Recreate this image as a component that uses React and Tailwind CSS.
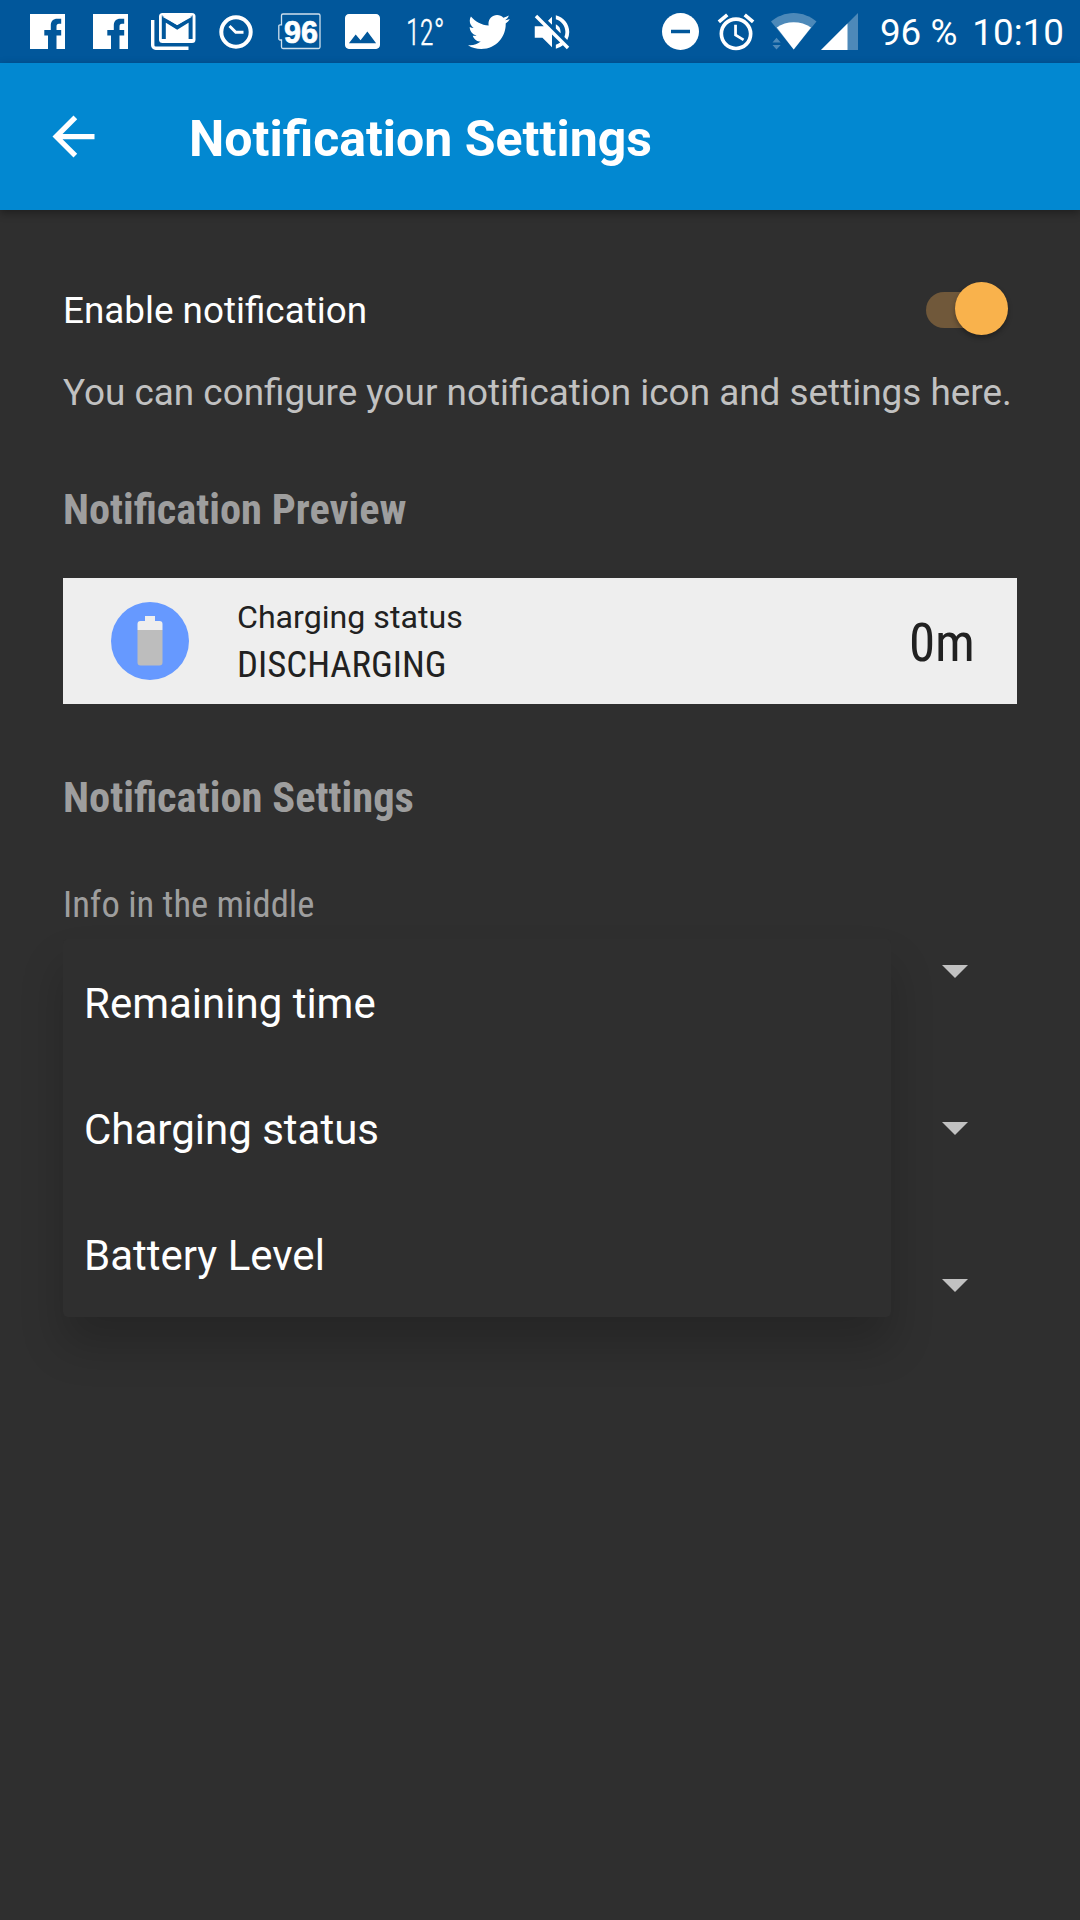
import React, { useState } from 'react';
import { MdArrowBack, MdVolumeOff, MdAlarm } from 'react-icons/md';
import { FaTwitter } from 'react-icons/fa';

const options = ['Remaining time', 'Charging status', 'Battery Level'];

const FacebookIcon = ({ className }) => (
    <svg viewBox="0 0 35 35" className={className} fill="#fff">
        <path d="M0 0h35v35H26.500V21.500h4.700v-5.500h-4.700v-3.500c0-1.800.7-2.700 2.500-2.700h2.200V4.700h-3.700c-4.500 0-6.700 2.600-6.700 6.800v4.500h-6.500v5.500h3.700V35H0z" />
    </svg>
);

const GmailIcon = () => (
    <svg viewBox="0 0 45 39" className="ml-[23px] h-[39px] w-[45px] shrink-0" fill="none">
        <path d="M1.700 8v25.300a3 3 0 0 0 3 3H37.500" stroke="#fff" strokeWidth="3.400" />
        <rect x="8" y="1" width="36.500" height="30" rx="3.500" fill="#fff" />
        <path d="M12.800 27V7L26.200 15.500L39.600 7V27" stroke="#01579b" strokeWidth="4" />
        <path d="M11 4.500H41.500L26.200 13Z" fill="#fff" />
    </svg>
);

const ClockIcon = () => (
    <svg viewBox="0 0 34 34" className="ml-[23px] h-[34px] w-[34px] shrink-0" fill="none" stroke="#fff">
        <circle cx="17" cy="17" r="14.700" strokeWidth="4" />
        <path d="M10.500 11L16.800 17.200H24.500" strokeWidth="3" />
    </svg>
);

const ImageIcon = () => (
    <svg viewBox="3 3 18 18" className="ml-[24px] h-[35px] w-[35px] shrink-0" fill="#fff">
        <path d="M21 19V5c0-1.100-.9-2-2-2H5c-1.100 0-2 .9-2 2v14c0 1.100.9 2 2 2h14c1.100 0 2-.9 2-2zM8.500 13.500l2.500 3.010L14.500 12l4.500 6H5l3.500-4.500z" />
    </svg>
);

const BatteryLevelIcon = () => (
    <svg viewBox="0 0 43 37" className="ml-[25px] h-[37px] w-[43px] shrink-0">
        <path d="M5 1H40.500a1.500 1.500 0 0 1 1.500 1.500V34a1.500 1.500 0 0 1-1.500 1.500H5a1.500 1.500 0 0 1-1.500-1.500V27H2a1.200 1.200 0 0 1-1.200-1.200V13A1.200 1.200 0 0 1 2 11.800H3.500V2.500A1.500 1.500 0 0 1 5 1z" fill="none" stroke="#cfe0ed" strokeWidth="1.300" />
        <text x="6" y="29.500" fontSize="30.500" fontWeight="700" fontFamily="Liberation Sans, sans-serif" fill="#fff" stroke="#fff" strokeWidth=".7" textLength="34">96</text>
    </svg>
);

const TemperatureIcon = () => (
    <svg viewBox="0 0 48 51" className="ml-[26px] h-[51px] w-[48px] shrink-0 overflow-visible">
        <text x="0" y="38.500" fontSize="36" fontWeight="300" fontFamily="Roboto Condensed, Roboto, sans-serif" fill="#fff" stroke="#fff" strokeWidth=".4" textLength="38.500" lengthAdjust="spacingAndGlyphs">12°</text>
    </svg>
);

const DoNotDisturbIcon = () => (
    <svg viewBox="0 0 37 37" className="h-[37px] w-[37px] shrink-0">
        <circle cx="18.500" cy="18.500" r="18.500" fill="#fff" />
        <path d="M9 18.500H28" stroke="#01579b" strokeWidth="3.500" />
    </svg>
);

const WifiIcon = () => (
    <svg viewBox="0 0 46 37" className="ml-[13px] h-[37px] w-[46px] shrink-0" fill="#fff">
        <path d="M0 8.500C6 3.500 14 0 22.700 0S39.500 3.500 45.500 8.500L22.700 36.500Z" fillOpacity=".3" />
        <path d="M5.800 14.500C10.500 11 16.500 9.300 22.700 9.300S35 11 40 14.500L22.700 36.500Z" />
        <path d="M0 36V29.500L5.500 23.500L11 29.500V32L5.500 37Z" fill="#01579b" />
        <path d="M1.500 29.500L5.500 24.700L9.700 29.500ZM1.500 32L5.500 36.500L9.700 32Z" fillOpacity=".3" />
    </svg>
);

const SignalIcon = () => (
    <svg viewBox="0 0 37 37" className="ml-[4px] h-[37px] w-[37px] shrink-0" fill="#fff">
        <path d="M0 37L37 0V37Z" fillOpacity=".3" />
        <path d="M0 37L26.500 10.500V37Z" />
    </svg>
);

const BatteryIcon = () => (
    <svg viewBox="0 0 78 78" className="ml-12 h-[78px] w-[78px] shrink-0">
        <circle cx="39" cy="39" r="39" fill="#6699ff" />
        <path d="M34 14h10v5h4.500a3 3 0 0 1 3 3v6h-25v-6a3 3 0 0 1 3-3H34z" fill="#eee" />
        <path d="M26.500 28h25v32.500a3 3 0 0 1-3 3h-19a3 3 0 0 1-3-3z" fill="#bdbdbd" />
    </svg>
);

const StatusBar = () => (
    <div className="flex h-[63px] items-center bg-[#01579b] pl-[30px] text-white">
        <FacebookIcon className="h-[35px] w-[35px] shrink-0" />
        <FacebookIcon className="ml-[28px] h-[35px] w-[35px] shrink-0" />
        <GmailIcon />
        <ClockIcon />
        <BatteryLevelIcon />
        <ImageIcon />
        <TemperatureIcon />
        <FaTwitter className="ml-[14px] h-[42px] w-[42px] shrink-0" />
        <MdVolumeOff className="ml-[19px] h-[46px] w-[46px] shrink-0" />
        <div className="ml-auto flex items-center pr-[16px]">
            <DoNotDisturbIcon />
            <MdAlarm className="ml-[15px] h-[44px] w-[44px] shrink-0" />
            <WifiIcon />
            <SignalIcon />
            <span className="ml-[22px] whitespace-pre pt-[3px] text-[36.800px] leading-[42px]">96 %</span>
            <span className="ml-[15px] pt-[3px] text-[36.800px] leading-[42px]">10:10</span>
        </div>
    </div>
);

const Switch = ({ checked, onChange }) => (
    <button
        type="button"
        role="switch"
        aria-checked={checked}
        onClick={() => onChange(!checked)}
        className="relative mr-[9px] flex h-[54px] w-[83px] items-center pl-px"
    >
        <span className="h-[36px] w-[70px] rounded-full bg-[#70583a]" />
        <span className="absolute right-0 top-[-1px] h-[53px] w-[53px] rounded-full bg-[#f9b24c] shadow-[0_3px_5px_rgba(0,0,0,0.3)]" />
    </button>
);

const Spinner = () => (
    <div className="flex h-[91px] items-center justify-end pr-[49.500px]">
        <svg viewBox="0 0 26 13" className="h-[13px] w-[26px]" fill="#c1c1c1">
            <path d="M0 0H26L13 13Z" />
        </svg>
    </div>
);

export default function App() {
    const [enabled, setEnabled] = useState(true);

    return (
        <div className="h-[1920px] w-[1080px] overflow-hidden bg-[#2f2f2f] font-['Roboto',sans-serif]">
            <StatusBar />
            <header className="flex h-[147px] items-center bg-[#0288d1] pl-[42px] text-white shadow-[0_3px_8px_rgba(0,0,0,0.35)]">
                <MdArrowBack className="h-[63px] w-[63px]" />
                <h1 className="ml-[84px] pt-[5px] text-[50px] font-bold leading-[60px]">Notification Settings</h1>
            </header>

            <main className="px-[63px] pt-[73px]">
                <div className="flex h-[54px] items-center justify-between">
                    <span className="pt-[2px] text-[36.850px] leading-[54px] text-white">Enable notification</span>
                    <Switch checked={enabled} onChange={setEnabled} />
                </div>
                <p className="mt-[32px] whitespace-nowrap text-[36.880px] leading-[48px] text-[#c1c1c1]">
                    You can configure your notification icon and settings here.
                </p>

                <h2 className="mt-[68px] font-['Roboto_Condensed','Roboto',sans-serif] text-[42.400px] font-bold leading-[50px] text-[#9e9e9e] [font-stretch:condensed]">
                    Notification Preview
                </h2>
                <div className="mt-[43px] flex h-[126px] items-center bg-[#eeeeee] text-[#212121]">
                    <BatteryIcon />
                    <div className="ml-[48px] flex flex-col pt-[2px]">
                        <span className="text-[32.150px] leading-[45px]">Charging status</span>
                        <span className="pt-px font-['Roboto_Condensed','Roboto',sans-serif] text-[36.800px] leading-[48px] [font-stretch:condensed]">DISCHARGING</span>
                    </div>
                    <span className="ml-auto pr-[42px] pt-[3px] font-['Roboto_Condensed','Roboto',sans-serif] text-[53px] leading-[60px] [font-stretch:condensed]">0m</span>
                </div>

                <h2 className="mt-[69px] font-['Roboto_Condensed','Roboto',sans-serif] text-[42.500px] font-bold leading-[50px] text-[#9e9e9e] [font-stretch:condensed]">
                    Notification Settings
                </h2>
                <p className="mt-[60px] font-['Roboto_Condensed','Roboto',sans-serif] text-[36.550px] leading-[44px] text-[#9e9e9e] [font-stretch:condensed]">
                    Info in the middle
                </p>
                <div className="relative -mt-px flex flex-col gap-[66px]">
                    <Spinner />
                    <Spinner />
                    <Spinner />
                    {/* open dropdown */}
                    <ul className="absolute left-0 top-[13px] w-[828px] rounded-[5px] bg-[#2f2f2f] shadow-[0_28px_44px_rgba(0,0,0,0.2)]">
                        {options.map((option) => (
                            <li key={option} className="flex h-[126px] items-center pl-[21px] pt-[2px] text-[42px] text-white">
                                {option}
                            </li>
                        ))}
                    </ul>
                </div>
            </main>
        </div>
    );
}
